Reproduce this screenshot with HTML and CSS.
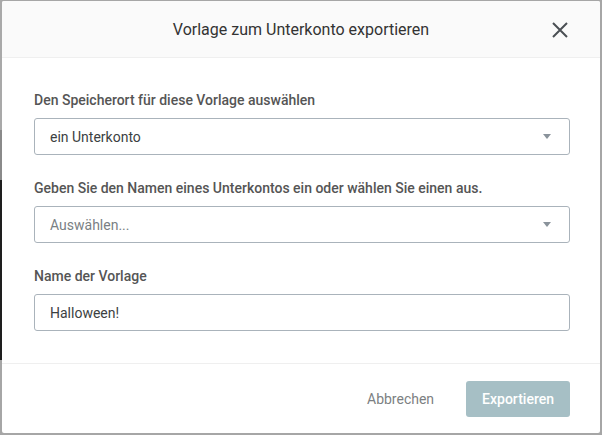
FILE: index.html
```html
<!DOCTYPE html>
<html lang="de">
  <head>
    <meta charset="UTF-8" />
    <meta name="viewport" content="width=device-width, initial-scale=1.0" />
    <title>Vorlage exportieren</title>
    <link rel="stylesheet" href="styles.css">
  </head>
  <body>
    <div class="backdrop">
      <div class="modal">
        <div class="modal-header">
          <h2 class="modal-title">Vorlage zum Unterkonto exportieren</h2>
          <button class="close" aria-label="Schließen">
            <svg width="16" height="16" viewBox="0 0 16 16">
              <path d="M1 1 L15 15 M15 1 L1 15" stroke="#4a4f54" stroke-width="2" fill="none" />
            </svg>
          </button>
        </div>

        <div class="modal-body">
          <label class="field-label">Den Speicherort für diese Vorlage auswählen</label>
          <div class="select">
            <span class="value">ein Unterkonto</span>
            <span class="arrow"></span>
          </div>

          <label class="field-label">Geben Sie den Namen eines Unterkontos ein oder wählen Sie einen aus.</label>
          <div class="select">
            <span class="placeholder">Auswählen...</span>
            <span class="arrow"></span>
          </div>

          <label class="field-label">Name der Vorlage</label>
          <input class="text-input" type="text" value="Halloween!" />
        </div>

        <div class="modal-footer">
          <button class="btn-link">Abbrechen</button>
          <button class="btn-primary" disabled>Exportieren</button>
        </div>
      </div>
    </div>
  </body>
</html>
```

FILE: styles.css
```css
html,
body {
  margin: 0;
  height: 100%;
}
body {
  font-family: Roboto, "Liberation Sans", sans-serif;
  background: #a6a6a6;
}
.backdrop {
  height: 100%;
  box-sizing: border-box;
  padding: 1px 2px 2px 2px;
  /* dark strip of the page behind, visible at the left edge */
  background: linear-gradient(
    to bottom,
    #a9a9a9 0,
    #a9a9a9 130px,
    #8a8a8a 130px,
    #8a8a8a 180px,
    #1e1e1e 180px,
    #1e1e1e 360px,
    #a6a6a6 360px
  ) left top / 2px 100% no-repeat, #a6a6a6;
}
.modal {
  height: 100%;
  background: #fff;
  border-radius: 2px;
  display: flex;
  flex-direction: column;
  overflow: hidden;
}
.modal-header {
  height: 56px;
  flex: none;
  background: #fafafa;
  border-bottom: 1px solid #efefef;
  display: flex;
  align-items: center;
  justify-content: center;
  position: relative;
}
.modal-title {
  margin: 0;
  font-size: 16px;
  font-weight: 400;
  color: #333;
}
.close {
  position: absolute;
  right: 31px;
  top: 20px;
  width: 18px;
  height: 18px;
  padding: 1px;
  border: none;
  background: none;
  cursor: pointer;
}
.close svg {
  display: block;
}
.modal-body {
  flex: 1;
  padding: 32px 30px 0 32px;
  display: flex;
  flex-direction: column;
}
.field-label {
  font-size: 14px;
  font-weight: 500;
  line-height: 20px;
  color: #555;
  margin-bottom: 8px;
}
.select,
.text-input {
  height: 37px;
  box-sizing: border-box;
  border: 1px solid #aab3bb;
  border-radius: 3px;
  background: #fff;
  font-family: inherit;
  font-size: 14px;
  color: #3c3f42;
}
.select {
  display: flex;
  align-items: center;
  justify-content: space-between;
  padding: 0 18px 0 15px;
  margin-bottom: 23px;
}
.placeholder {
  color: #7a7f84;
}
.arrow {
  width: 0;
  height: 0;
  border-left: 4px solid transparent;
  border-right: 4px solid transparent;
  border-top: 5px solid #8a939b;
}
.text-input {
  padding: 0 15px;
  outline: none;
}
.modal-footer {
  flex: none;
  height: 69px;
  border-top: 1px solid #efefef;
  display: flex;
  align-items: center;
  justify-content: flex-end;
  gap: 18px;
  padding: 0 30px;
}
.btn-link {
  border: none;
  background: none;
  font-family: inherit;
  font-size: 14px;
  color: #7c7f82;
  padding: 8px 14px;
}
.btn-primary {
  border: none;
  border-radius: 3px;
  background: #a6bfc5;
  color: #fff;
  font-family: inherit;
  font-size: 14px;
  font-weight: 500;
  height: 36px;
  padding: 0 16px;
}
```
